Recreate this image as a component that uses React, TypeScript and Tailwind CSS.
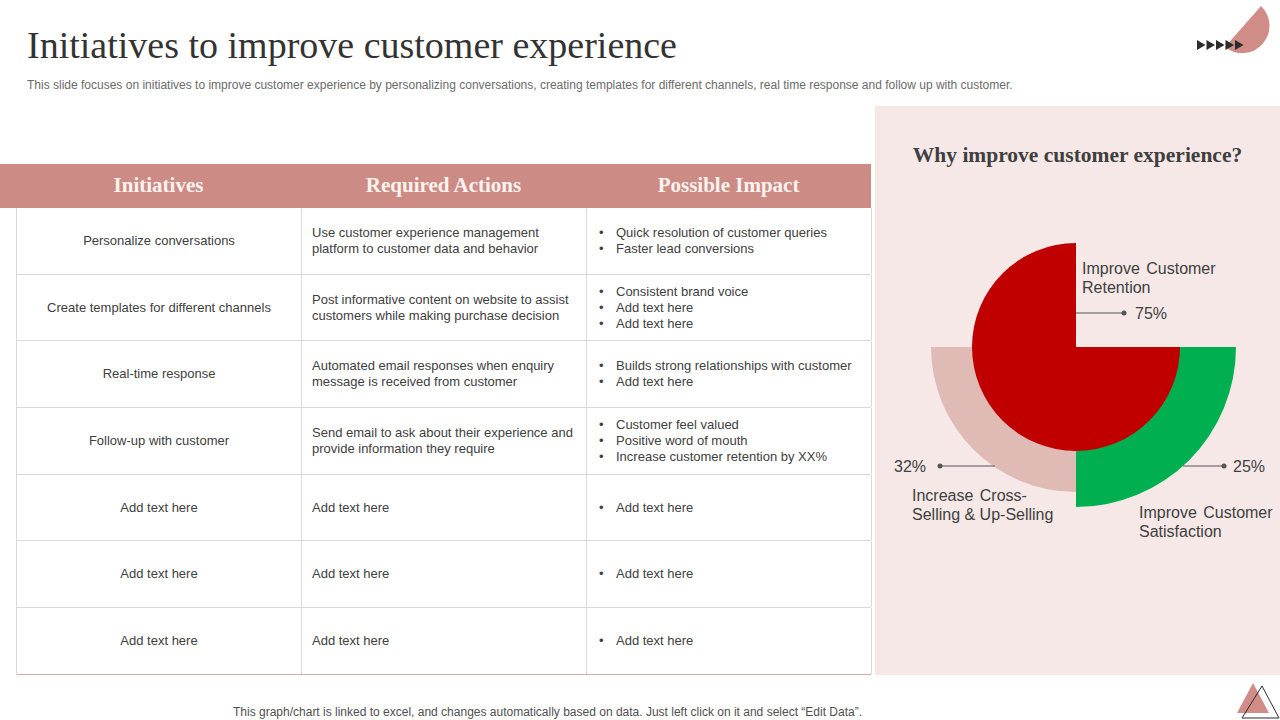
const rows = [
  {
    initiative: 'Personalize conversations',
    action: 'Use customer experience management platform to customer data and behavior',
    impact: ['Quick resolution of customer queries', 'Faster lead conversions'],
  },
  {
    initiative: 'Create templates for different channels',
    action: 'Post informative  content on website to assist customers while making purchase decision',
    impact: ['Consistent brand voice', 'Add text here', 'Add text here'],
  },
  {
    initiative: 'Real-time response',
    action: 'Automated email responses when enquiry message is received  from customer',
    impact: ['Builds strong relationships with customer', 'Add text here'],
  },
  {
    initiative: 'Follow-up with customer',
    action: 'Send email to ask about their experience and provide information they require',
    impact: ['Customer feel valued', 'Positive word of mouth', 'Increase customer retention by XX%'],
  },
  { initiative: 'Add text here', action: 'Add text here', impact: ['Add text here'] },
  { initiative: 'Add text here', action: 'Add text here', impact: ['Add text here'] },
  { initiative: 'Add text here', action: 'Add text here', impact: ['Add text here'] },
];

function Logo() {
  return (
    <svg width="90" height="56" viewBox="0 0 90 56" className="shrink-0">
      {/* semicircle, flat edge on the diagonal */}
      <path d="M35,47 L71,6 A27.3,27.3 0 0 1 35,47 Z" fill="#d08c87" />
      {[0, 1, 2, 3, 4].map((i) => (
        <path key={i} d={`M${7 + i * 9.5},40 L${15.5 + i * 9.5},45 L${7 + i * 9.5},50 Z`} fill="#2b2b2b" />
      ))}
    </svg>
  );
}

function CornerMark() {
  return (
    <svg width="46" height="45" viewBox="0 0 46 45" className="block shrink-0">
      <path d="M19,8 L35,38 L3,38 Z" fill="#d08c87" />
      <path d="M28,11 L45,43 L8,43 Z" fill="none" stroke="#2b2b2b" strokeWidth="1" />
    </svg>
  );
}

function Chart() {
  const lbl = { fontFamily: '"Liberation Sans", Arial, sans-serif', fontSize: 16, fill: '#404040' };
  return (
    <svg width="405" height="469" viewBox="0 0 405 469" className="block">
      <path d="M201,141 L201,286 A145,145 0 0 1 56,141 Z" fill="#e0bab5" />
      <path d="M201,141 L361,141 A160,160 0 0 1 201,301 Z" fill="#00b050" />
      <path d="M201,141 L201,37 A104,104 0 1 0 305,141 Z" fill="#c00000" />

      <text x="207" y="68" style={lbl} wordSpacing="2">Improve Customer</text>
      <text x="207" y="87" style={lbl}>Retention</text>
      <line x1="201" y1="107" x2="249" y2="107" stroke="#555" strokeWidth="1" />
      <circle cx="249" cy="107" r="2.5" fill="#555" />
      <text x="260" y="113" style={lbl}>75%</text>

      <text x="19" y="266" style={lbl}>32%</text>
      <line x1="65" y1="260" x2="120" y2="260" stroke="#555" strokeWidth="1" />
      <circle cx="65" cy="260" r="2.5" fill="#555" />
      <text x="37" y="295" style={lbl} wordSpacing="2">Increase Cross-</text>
      <text x="37" y="314" style={lbl}>Selling &amp; Up-Selling</text>

      <text x="358" y="266" style={lbl}>25%</text>
      <line x1="308" y1="260" x2="349" y2="260" stroke="#555" strokeWidth="1" />
      <circle cx="349" cy="260" r="2.5" fill="#555" />
      <text x="264" y="312" style={lbl} wordSpacing="2">Improve Customer</text>
      <text x="264" y="331" style={lbl}>Satisfaction</text>
    </svg>
  );
}

export default function App() {
  return (
    <div className="w-[1280px] h-[720px] bg-white flex flex-col overflow-hidden font-['Liberation_Sans',Arial,sans-serif] text-[#404040]">
      {/* header */}
      <div className="h-[106px] shrink-0 flex justify-between items-start">
        <div className="pl-[27px]">
          <h1 className="pt-[22px] text-[38px] leading-[46px] text-[#333] font-['Liberation_Serif','Times_New_Roman',serif]">
            Initiatives to improve customer experience
          </h1>
          <p className="mt-[10px] text-[12px] leading-[14px] text-[#6b6b6b]">
            This slide focuses on initiatives to improve customer experience by personalizing conversations, creating templates for different channels, real time response and follow up with customer.
          </p>
        </div>
        <Logo />
      </div>

      {/* main */}
      <div className="flex shrink-0 gap-[4px] h-[569px]">
        <div className="w-[871px] pt-[58px] flex flex-col">
          <div className="h-[44px] bg-[#cd8b86] pl-[16px] grid grid-cols-[285px_285px_285px] items-center text-[#fdf3ee] font-bold text-[21px] font-['Liberation_Serif','Times_New_Roman',serif]">
            <div className="text-center">Initiatives</div>
            <div className="text-center">Required Actions</div>
            <div className="text-center">Possible Impact</div>
          </div>
          <div className="ml-[16px] border-l border-[#d9d9d9] text-[13px] leading-[16px] text-[#404040]">
            {rows.map((r, i) => (
              <div
                key={i}
                className={
                  'h-[66.7px] grid grid-cols-[285px_285px_285px] border-b ' +
                  (i === rows.length - 1 ? 'border-[#d4aaa6]' : 'border-[#d9d9d9]')
                }
              >
                <div className="flex items-center justify-center text-center px-2 border-r border-[#d9d9d9]">
                  {r.initiative}
                </div>
                <div className="flex items-center pl-[10px] pr-[8px] border-r border-[#d9d9d9]">
                  <span>{r.action}</span>
                </div>
                <div className="flex flex-col justify-center pl-[12px] pr-2 border-r border-[#d9d9d9]">
                  {r.impact.map((t, j) => (
                    <div key={j} className="flex">
                      <span className="w-[17px] shrink-0">•</span>
                      <span>{t}</span>
                    </div>
                  ))}
                </div>
              </div>
            ))}
          </div>
        </div>

        <div className="w-[405px] bg-[#f5e8e6] flex flex-col">
          <div className="h-[100px] pt-[36px] text-center font-bold text-[21.5px] leading-[26px] text-[#3f3f3f] font-['Liberation_Serif','Times_New_Roman',serif]">
            Why improve customer experience?
          </div>
          <Chart />
        </div>
      </div>

      {/* footer */}
      <div className="h-[45px] shrink-0 flex items-end justify-between">
        <p className="pl-[233px] pb-[1px] text-[12px] leading-[14px] text-[#505050]">
          This graph/chart is linked to excel, and changes automatically based on data. Just left click on it and select “Edit Data”.
        </p>
        <CornerMark />
      </div>
    </div>
  );
}
